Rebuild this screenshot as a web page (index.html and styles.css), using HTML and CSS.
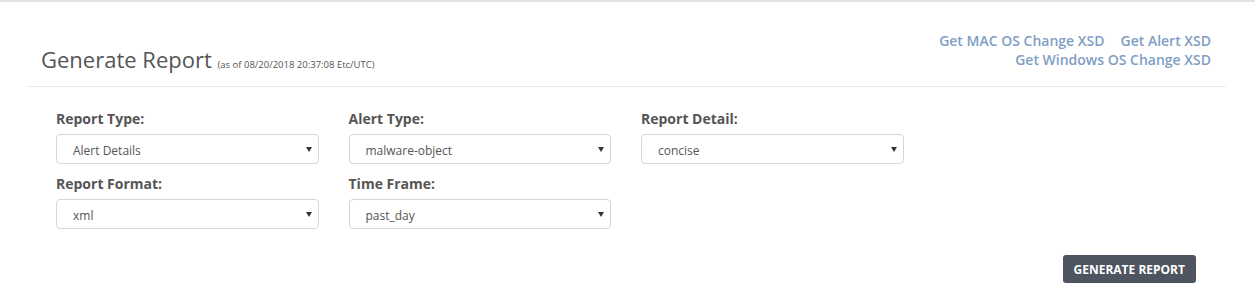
FILE: index.html
```html
<!DOCTYPE html>
<html lang="en">
<head>
<meta charset="utf-8">
<title>Generate Report</title>
<link rel="stylesheet" href="styles.css">
</head>
<body>
<div class="panel">
  <div class="header">
    <h1 class="title">Generate Report <small class="asof">(as of 08/20/2018 20:37:08 Etc/UTC)</small></h1>
    <div class="links">
      <div class="link-line"><a href="#">Get MAC OS Change XSD</a><a href="#" class="gap">Get Alert XSD</a></div>
      <div class="link-line"><a href="#">Get Windows OS Change XSD</a></div>
    </div>
  </div>
  <form class="form">
    <div class="grid">
      <div class="field">
        <label class="label">Report Type:</label>
        <div class="select-wrap"><select class="select"><option>Alert Details</option></select></div>
      </div>
      <div class="field">
        <label class="label">Alert Type:</label>
        <div class="select-wrap"><select class="select"><option>malware-object</option></select></div>
      </div>
      <div class="field">
        <label class="label">Report Detail:</label>
        <div class="select-wrap"><select class="select"><option>concise</option></select></div>
      </div>
      <div class="field empty"></div>
      <div class="field">
        <label class="label">Report Format:</label>
        <div class="select-wrap"><select class="select"><option>xml</option></select></div>
      </div>
      <div class="field">
        <label class="label">Time Frame:</label>
        <div class="select-wrap"><select class="select"><option>past_day</option></select></div>
      </div>
    </div>
    <div class="actions">
      <button type="button" class="btn">Generate Report</button>
    </div>
  </form>
</div>
</body>
</html>
```

FILE: styles.css
```css
html, body {
  margin: 0;
  padding: 0;
  background: #fff;
}
body {
  border-top: 2px solid #e2e2e2;
  font-family: "Open Sans", "Liberation Sans", Arial, sans-serif;
  color: #555;
}
.panel {
  margin: 0 29px 0 26px;
}
.header {
  display: flex;
  justify-content: space-between;
  align-items: flex-start;
  padding: 29px 15px 12px 15px;
  border-bottom: 1px solid #ebebeb;
}
.title {
  margin: 13px 0 0 0;
  font-size: 22px;
  line-height: 30px;
  font-weight: 400;
  color: #555;
}
.asof {
  font-size: 9.5px;
  line-height: 1;
  color: #555;
}
.links {
  text-align: right;
  font-size: 14px;
  line-height: 19px;
  font-weight: 600;
}
.links a {
  color: #7f9ec4;
  text-decoration: none;
}
.links .gap {
  margin-left: 16px;
}
.form {
  padding-top: 22px;
}
.grid {
  display: grid;
  grid-template-columns: repeat(4, 1fr);
  padding: 0 15px;
}
.field {
  padding: 0 15px 10px 15px;
}
.label {
  display: block;
  font-size: 14px;
  line-height: 20px;
  font-weight: 700;
  color: #555;
  margin-bottom: 5px;
}
.select-wrap {
  position: relative;
}
.select-wrap::after {
  content: "";
  position: absolute;
  right: 7px;
  top: 13px;
  border-left: 3px solid transparent;
  border-right: 3px solid transparent;
  border-top: 5px solid #333;
  pointer-events: none;
}
.select {
  -webkit-appearance: none;
  appearance: none;
  display: block;
  width: 100%;
  height: 30px;
  margin: 0;
  padding: 2px 20px 0 16px;
  border: 1px solid #d6d6d6;
  border-radius: 4px;
  background: #fff;
  font-family: "Open Sans", "Liberation Sans", Arial, sans-serif;
  font-size: 12px;
  color: #555;
  box-sizing: border-box;
}
.actions {
  display: flex;
  justify-content: flex-end;
  padding: 16px 30px 0 0;
}
.btn {
  height: 28px;
  padding: 0 11px;
  border: none;
  border-radius: 3px;
  background: #4e5460;
  color: #fff;
  font-family: "Open Sans", "Liberation Sans", Arial, sans-serif;
  font-size: 12px;
  font-weight: 700;
  text-transform: uppercase;
}
```
